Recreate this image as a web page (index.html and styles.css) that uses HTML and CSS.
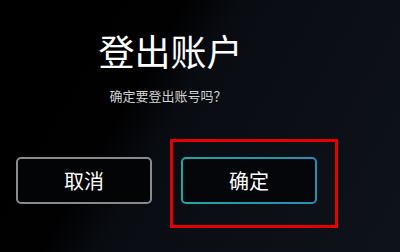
FILE: index.html
```html
<!DOCTYPE html>
<html lang="zh-CN">
<head>
<meta charset="utf-8">
<link rel="stylesheet" href="styles.css">
</head>
<body>
<div class="screen">
  <div class="dialog">
    <h1 class="title">登出账户</h1>
    <p class="message">确定要登出账号吗？</p>
    <div class="actions">
      <button class="btn btn-cancel">取消</button>
      <div class="focus-wrap">
        <button class="btn btn-confirm">确定</button>
        <span class="highlight"></span>
      </div>
    </div>
  </div>
</div>
</body>
</html>
```
FILE: styles.css
```css
html, body {
  margin: 0;
  padding: 0;
  background: #000;
}
.screen {
  width: 400px;
  height: 252px;
  overflow: hidden;
  background: linear-gradient(120deg, #000 0%, #010102 34%, #080b10 44%, #0b0e15 60%, #0e1219 100%);
  font-family: "Noto Sans CJK SC", "Noto Sans", sans-serif;
  color: #fff;
}
.dialog {
  width: 301px;
  margin-left: 16px;
  padding-top: 29px;
  display: flex;
  flex-direction: column;
}
.title {
  margin: 0;
  padding-left: 8px;
  font-size: 36px;
  font-weight: 400;
  line-height: 43px;
  text-align: center;
  color: #fff;
}
.message {
  margin: 15px 0 0;
  padding-left: 3px;
  font-size: 13px;
  line-height: 18px;
  text-align: center;
  color: #d2d2d2;
}
.actions {
  margin-top: 52px;
  display: flex;
  gap: 29px;
}
.focus-wrap {
  position: relative;
  display: flex;
}
.btn {
  width: 136px;
  height: 47px;
  border-radius: 5px;
  font-family: "Noto Sans CJK SC", "Noto Sans", sans-serif;
  font-size: 20px;
  color: #fff;
  padding: 0;
  display: flex;
  align-items: center;
  justify-content: center;
}
.btn-cancel {
  background: #030405;
  border: 2px solid #8a8a8a;
}
.btn-confirm {
  border: 2px solid transparent;
  background:
    linear-gradient(#04060a, #04060a) padding-box,
    linear-gradient(90deg, #1fa89e, #2a8cb4) border-box;
}
.highlight {
  position: absolute;
  left: -11px;
  top: -18px;
  width: 162px;
  height: 83px;
  border: 3px solid #e60000;
  pointer-events: none;
}
```
